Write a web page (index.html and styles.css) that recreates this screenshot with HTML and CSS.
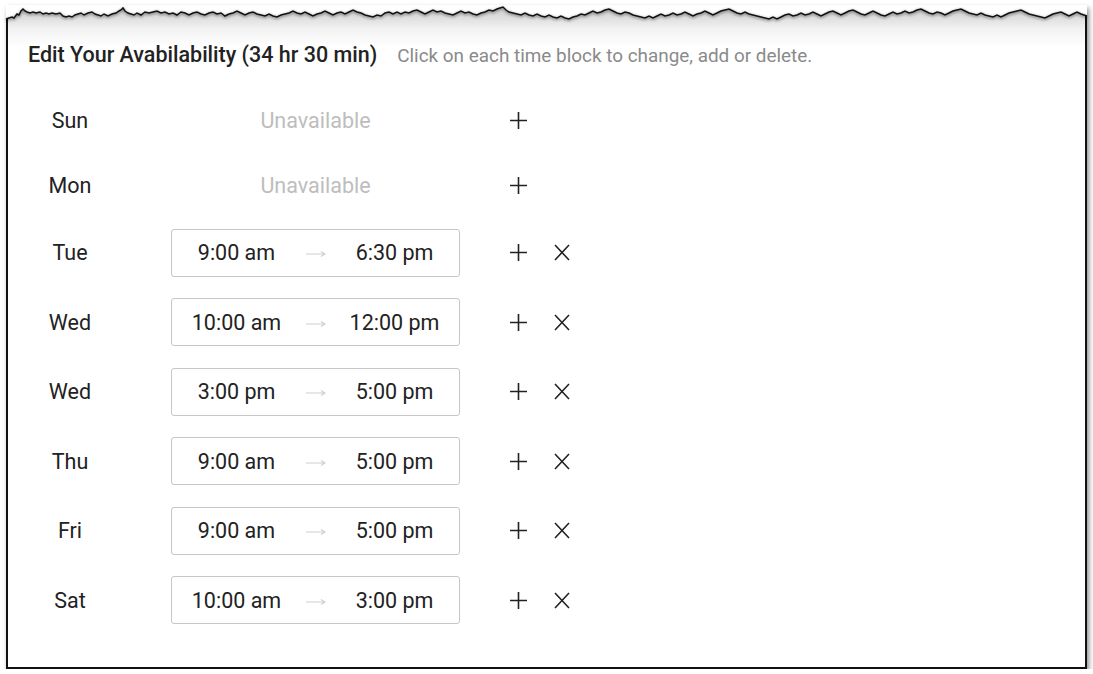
FILE: index.html
```html
<!DOCTYPE html>
<html>
<head>
<meta charset="utf-8">
<link rel="stylesheet" href="styles.css">
</head>
<body>
<div class="card">
  <svg class="torn" viewBox="6 4 1081 24" width="1081" height="24" preserveAspectRatio="none">
    <path class="torn-fill" d="M6,4 L6,18 L9,17 L12,16 L14,17 L17,13 L19,14 L21,10 L23,8 L25,10 L27,11 L30,12 L33,11 L36,12 L40,11 L43,13 L46,12 L49,13 L52,12 L56,13 L60,12 L63,15 L66,16 L69,15 L72,16 L75,14 L78,13 L81,12 L84,14 L88,12 L92,11 L95,13 L98,14 L101,15 L104,13 L108,15 L112,13 L116,12 L119,10 L121,9 L123,7 L125,10 L128,12 L131,13 L134,14 L137,12 L141,14 L145,11 L149,12 L153,11 L157,10 L161,12 L165,11 L169,13 L173,12 L177,14 L181,11 L185,12 L189,14 L193,12 L197,11 L201,13 L205,14 L209,12 L213,11 L217,13 L221,12 L225,15 L229,13 L233,12 L237,10 L241,12 L245,14 L249,12 L253,11 L257,13 L261,14 L265,15 L269,13 L273,15 L277,16 L281,14 L285,13 L289,12 L293,10 L297,12 L301,13 L305,11 L309,13 L313,15 L317,13 L321,12 L325,10 L329,12 L333,14 L337,12 L341,11 L345,13 L349,11 L353,9 L357,11 L361,12 L365,14 L369,15 L373,16 L377,14 L381,15 L385,12 L389,11 L393,13 L397,11 L401,13 L405,11 L409,12 L413,10 L417,9 L421,11 L425,13 L429,11 L433,9 L437,11 L441,10 L445,12 L449,13 L453,14 L457,12 L461,10 L465,12 L469,11 L473,13 L477,14 L481,12 L485,11 L489,9 L493,10 L497,8 L500,7 L503,6 L506,9 L509,11 L513,12 L517,13 L521,14 L525,12 L529,14 L533,15 L537,13 L541,15 L545,16 L549,14 L553,16 L557,17 L561,15 L565,17 L569,18 L573,16 L577,15 L581,13 L585,14 L589,12 L593,10 L597,12 L601,11 L605,9 L609,8 L613,10 L617,12 L621,13 L625,11 L629,12 L633,14 L637,15 L641,16 L645,17 L649,15 L653,17 L657,15 L661,13 L665,15 L669,14 L673,12 L677,14 L681,13 L685,11 L689,13 L693,15 L697,13 L701,12 L705,10 L709,12 L713,14 L717,12 L721,10 L725,9 L729,8 L733,10 L737,12 L741,13 L745,11 L749,13 L753,14 L757,15 L761,16 L765,17 L769,18 L773,16 L777,18 L781,16 L785,14 L789,13 L793,15 L797,14 L801,12 L805,14 L809,13 L813,11 L817,13 L821,15 L825,13 L829,11 L833,10 L837,12 L841,14 L845,12 L849,10 L853,9 L857,11 L861,13 L865,14 L869,12 L873,10 L877,12 L881,14 L885,15 L889,13 L893,11 L897,13 L901,12 L905,10 L909,12 L913,11 L917,9 L921,8 L925,10 L929,12 L933,13 L937,11 L941,12 L945,14 L949,12 L953,10 L957,9 L961,8 L965,10 L969,12 L973,13 L977,14 L981,12 L985,14 L989,15 L993,16 L997,14 L1001,16 L1005,14 L1009,12 L1013,11 L1017,10 L1021,9 L1025,11 L1029,13 L1033,14 L1037,15 L1041,16 L1045,17 L1049,15 L1053,13 L1057,12 L1061,11 L1065,13 L1069,15 L1073,13 L1077,11 L1081,13 L1084,14 L1087,15 L1087,4 Z"/>
    <path class="torn-line" d="M6,18 L9,17 L12,16 L14,17 L17,13 L19,14 L21,10 L23,8 L25,10 L27,11 L30,12 L33,11 L36,12 L40,11 L43,13 L46,12 L49,13 L52,12 L56,13 L60,12 L63,15 L66,16 L69,15 L72,16 L75,14 L78,13 L81,12 L84,14 L88,12 L92,11 L95,13 L98,14 L101,15 L104,13 L108,15 L112,13 L116,12 L119,10 L121,9 L123,7 L125,10 L128,12 L131,13 L134,14 L137,12 L141,14 L145,11 L149,12 L153,11 L157,10 L161,12 L165,11 L169,13 L173,12 L177,14 L181,11 L185,12 L189,14 L193,12 L197,11 L201,13 L205,14 L209,12 L213,11 L217,13 L221,12 L225,15 L229,13 L233,12 L237,10 L241,12 L245,14 L249,12 L253,11 L257,13 L261,14 L265,15 L269,13 L273,15 L277,16 L281,14 L285,13 L289,12 L293,10 L297,12 L301,13 L305,11 L309,13 L313,15 L317,13 L321,12 L325,10 L329,12 L333,14 L337,12 L341,11 L345,13 L349,11 L353,9 L357,11 L361,12 L365,14 L369,15 L373,16 L377,14 L381,15 L385,12 L389,11 L393,13 L397,11 L401,13 L405,11 L409,12 L413,10 L417,9 L421,11 L425,13 L429,11 L433,9 L437,11 L441,10 L445,12 L449,13 L453,14 L457,12 L461,10 L465,12 L469,11 L473,13 L477,14 L481,12 L485,11 L489,9 L493,10 L497,8 L500,7 L503,6 L506,9 L509,11 L513,12 L517,13 L521,14 L525,12 L529,14 L533,15 L537,13 L541,15 L545,16 L549,14 L553,16 L557,17 L561,15 L565,17 L569,18 L573,16 L577,15 L581,13 L585,14 L589,12 L593,10 L597,12 L601,11 L605,9 L609,8 L613,10 L617,12 L621,13 L625,11 L629,12 L633,14 L637,15 L641,16 L645,17 L649,15 L653,17 L657,15 L661,13 L665,15 L669,14 L673,12 L677,14 L681,13 L685,11 L689,13 L693,15 L697,13 L701,12 L705,10 L709,12 L713,14 L717,12 L721,10 L725,9 L729,8 L733,10 L737,12 L741,13 L745,11 L749,13 L753,14 L757,15 L761,16 L765,17 L769,18 L773,16 L777,18 L781,16 L785,14 L789,13 L793,15 L797,14 L801,12 L805,14 L809,13 L813,11 L817,13 L821,15 L825,13 L829,11 L833,10 L837,12 L841,14 L845,12 L849,10 L853,9 L857,11 L861,13 L865,14 L869,12 L873,10 L877,12 L881,14 L885,15 L889,13 L893,11 L897,13 L901,12 L905,10 L909,12 L913,11 L917,9 L921,8 L925,10 L929,12 L933,13 L937,11 L941,12 L945,14 L949,12 L953,10 L957,9 L961,8 L965,10 L969,12 L973,13 L977,14 L981,12 L985,14 L989,15 L993,16 L997,14 L1001,16 L1005,14 L1009,12 L1013,11 L1017,10 L1021,9 L1025,11 L1029,13 L1033,14 L1037,15 L1041,16 L1045,17 L1049,15 L1053,13 L1057,12 L1061,11 L1065,13 L1069,15 L1073,13 L1077,11 L1081,13 L1084,14 L1087,15"/>
  </svg>

  <div class="header">
    <h1 class="title">Edit Your Avabilability (34 hr 30 min)</h1>
    <span class="hint">Click on each time block to change, add or delete.</span>
  </div>

  <div class="rows">
    <div class="row row-empty">
      <div class="day">Sun</div>
      <div class="slot slot-empty">Unavailable</div>
      <span class="icon plus"><svg viewBox="0 0 17 17" width="17" height="17"><path d="M8.5 0V17M0 8.5H17"/></svg></span>
    </div>
    <div class="row row-empty">
      <div class="day">Mon</div>
      <div class="slot slot-empty">Unavailable</div>
      <span class="icon plus"><svg viewBox="0 0 17 17" width="17" height="17"><path d="M8.5 0V17M0 8.5H17"/></svg></span>
    </div>
    <div class="row">
      <div class="day">Tue</div>
      <div class="slot"><span class="t">9:00 am</span><span class="arrow"><svg viewBox="0 0 20 8" width="20" height="8"><path d="M0 4H19M15 1.5L19 4L15 6.5"/></svg></span><span class="t">6:30 pm</span></div>
      <span class="icon plus"><svg viewBox="0 0 17 17" width="17" height="17"><path d="M8.5 0V17M0 8.5H17"/></svg></span>
      <span class="icon cross"><svg viewBox="0 0 16 17" width="16" height="17"><path d="M1 1L15 16M15 1L1 16"/></svg></span>
    </div>
    <div class="row">
      <div class="day">Wed</div>
      <div class="slot"><span class="t">10:00 am</span><span class="arrow"><svg viewBox="0 0 20 8" width="20" height="8"><path d="M0 4H19M15 1.5L19 4L15 6.5"/></svg></span><span class="t">12:00 pm</span></div>
      <span class="icon plus"><svg viewBox="0 0 17 17" width="17" height="17"><path d="M8.5 0V17M0 8.5H17"/></svg></span>
      <span class="icon cross"><svg viewBox="0 0 16 17" width="16" height="17"><path d="M1 1L15 16M15 1L1 16"/></svg></span>
    </div>
    <div class="row">
      <div class="day">Wed</div>
      <div class="slot"><span class="t">3:00 pm</span><span class="arrow"><svg viewBox="0 0 20 8" width="20" height="8"><path d="M0 4H19M15 1.5L19 4L15 6.5"/></svg></span><span class="t">5:00 pm</span></div>
      <span class="icon plus"><svg viewBox="0 0 17 17" width="17" height="17"><path d="M8.5 0V17M0 8.5H17"/></svg></span>
      <span class="icon cross"><svg viewBox="0 0 16 17" width="16" height="17"><path d="M1 1L15 16M15 1L1 16"/></svg></span>
    </div>
    <div class="row">
      <div class="day">Thu</div>
      <div class="slot"><span class="t">9:00 am</span><span class="arrow"><svg viewBox="0 0 20 8" width="20" height="8"><path d="M0 4H19M15 1.5L19 4L15 6.5"/></svg></span><span class="t">5:00 pm</span></div>
      <span class="icon plus"><svg viewBox="0 0 17 17" width="17" height="17"><path d="M8.5 0V17M0 8.5H17"/></svg></span>
      <span class="icon cross"><svg viewBox="0 0 16 17" width="16" height="17"><path d="M1 1L15 16M15 1L1 16"/></svg></span>
    </div>
    <div class="row">
      <div class="day">Fri</div>
      <div class="slot"><span class="t">9:00 am</span><span class="arrow"><svg viewBox="0 0 20 8" width="20" height="8"><path d="M0 4H19M15 1.5L19 4L15 6.5"/></svg></span><span class="t">5:00 pm</span></div>
      <span class="icon plus"><svg viewBox="0 0 17 17" width="17" height="17"><path d="M8.5 0V17M0 8.5H17"/></svg></span>
      <span class="icon cross"><svg viewBox="0 0 16 17" width="16" height="17"><path d="M1 1L15 16M15 1L1 16"/></svg></span>
    </div>
    <div class="row">
      <div class="day">Sat</div>
      <div class="slot"><span class="t">10:00 am</span><span class="arrow"><svg viewBox="0 0 20 8" width="20" height="8"><path d="M0 4H19M15 1.5L19 4L15 6.5"/></svg></span><span class="t">3:00 pm</span></div>
      <span class="icon plus"><svg viewBox="0 0 17 17" width="17" height="17"><path d="M8.5 0V17M0 8.5H17"/></svg></span>
      <span class="icon cross"><svg viewBox="0 0 16 17" width="16" height="17"><path d="M1 1L15 16M15 1L1 16"/></svg></span>
    </div>
  </div>
</div>
</body>
</html>
```
FILE: styles.css
```css
html, body {
  margin: 0;
  padding: 0;
  background: #ffffff;
}
body {
  padding: 5px 6px 0 6px;
  font-family: Roboto, "Liberation Sans", Arial, sans-serif;
  color: #212121;
}
.card {
  width: 1077px;
  border: 2px solid #111;
  border-top: 0;
  background: linear-gradient(to bottom, #d6d6d6 8px, #f2f2f2 24px, #ffffff 42px);
  box-shadow: 2px 3px 5px rgba(0, 0, 0, 0.45);
  padding: 0 0 43px 0;
}
.torn {
  display: block;
  margin: 0 -2px;
  overflow: visible;
}
.torn-fill {
  fill: #ffffff;
}
.torn-line {
  fill: none;
  stroke: #111;
  stroke-width: 1.5;
  filter: drop-shadow(0 1px 1.5px rgba(0, 0, 0, 0.6));
}
.header {
  display: flex;
  align-items: baseline;
  gap: 20px;
  padding: 14px 0 0 20px;
  height: 24px;
  line-height: 24px;
}
.title {
  margin: 0;
  font-size: 21.5px;
  font-weight: 500;
  color: #222;
}
.hint {
  font-size: 18.9px;
  color: #8a8a8a;
}
.rows {
  display: flex;
  flex-direction: column;
  gap: 21.5px;
  margin-top: 31.75px;
  padding-left: 20px;
}
.row {
  display: flex;
  align-items: center;
  height: 48px;
}
.row-empty {
  height: 43.5px;
}
.day {
  width: 84px;
  text-align: center;
  font-size: 21.5px;
  color: #222;
}
.slot {
  box-sizing: border-box;
  width: 289px;
  height: 48px;
  margin-left: 59px;
  border: 1px solid #c6c6c6;
  border-radius: 3px;
  display: grid;
  grid-template-columns: 1fr 29px 1fr;
  align-items: center;
  font-size: 21.5px;
  color: #222;
}
.slot-empty {
  display: flex;
  justify-content: center;
  border: 0;
  height: auto;
  color: #bdbdbd;
}
.t {
  text-align: center;
  white-space: nowrap;
}
.arrow {
  display: flex;
  justify-content: center;
  padding-top: 3px;
}
.arrow svg path {
  fill: none;
  stroke: #cfcfcf;
  stroke-width: 1.2;
}
.icon {
  display: flex;
}
.icon svg path {
  fill: none;
  stroke: #222;
  stroke-width: 1.6;
}
.plus {
  margin-left: 50px;
}
.cross {
  margin-left: 27px;
}
```
